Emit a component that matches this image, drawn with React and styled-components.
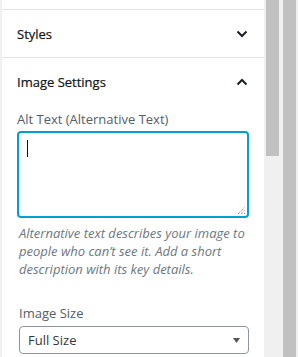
import React from "react";
import styled, { createGlobalStyle } from "styled-components";

const Global = createGlobalStyle`
  html, body { margin: 0; padding: 0; background: #fff; }
  body { font-family: "Open Sans", "Noto Sans", sans-serif; }
  * { box-sizing: border-box; }
`;

const Page = styled.div`
  display: flex;
  width: 298px;
  height: 357px;
  overflow: hidden;
`;

const Panel = styled.div`
  width: 264px;
  height: 100%;
  border-left: 2px solid #f0f0f0;
  background: #fff;
  display: flex;
  flex-direction: column;
`;

const Stub = styled.div`
  height: 10px;
  border-bottom: 1px solid #e2e4e7;
  flex: none;
`;

const Section = styled.div`
  border-bottom: ${(p) => (p.$open ? "none" : "1px solid #e2e4e7")};
  flex: none;
`;

const Header = styled.div`
  height: ${(p) => p.$h}px;
  display: flex;
  align-items: center;
  justify-content: space-between;
  padding: 0 16px 0 15px;
  font-size: 13px;
  font-weight: 400;
  color: #111418;
  -webkit-text-stroke: 0.2px #111418;
`;

const Body = styled.div`
  padding: 4px 15px 0 15px;
  display: flex;
  flex-direction: column;
`;

const Label = styled.div`
  font-size: 13px;
  line-height: 18px;
  color: #555d66;
  margin-bottom: ${(p) => p.$mb}px;
`;

const TextBox = styled.div`
  position: relative;
  width: 232px;
  height: 87px;
  border: 2px solid #00a0d2;
  border-radius: 4px;
  background: #fff;
`;

const Caret = styled.span`
  position: absolute;
  left: 8px;
  top: 7px;
  width: 1px;
  height: 17px;
  background: #111;
`;

const Grip = styled.svg`
  position: absolute;
  right: 1px;
  bottom: 1px;
`;

const Help = styled.p`
  margin: 6px 0 0 2px;
  font-size: 13px;
  line-height: 18px;
  font-style: italic;
  color: #6c7781;
`;

const Field = styled.div`
  margin-top: 26px;
  padding-left: 2px;
  display: flex;
  flex-direction: column;
`;

const Select = styled.div`
  width: 230px;
  height: 28px;
  border: 1px solid #8d96a0;
  border-radius: 4px;
  display: flex;
  align-items: center;
  justify-content: space-between;
  padding: 0 8px 0 8px;
  font-size: 13px;
  color: #32373c;
`;

const Track = styled.div`
  width: 17px;
  height: 100%;
  background: #f0f0f0;
  padding: 0 2px;
  flex: none;
`;

const Thumb = styled.div`
  width: 13px;
  height: ${(p) => p.$h};
  background: #c1c1c1;
`;

const Chevron = ({ up }) => (
  <svg width="12" height="8" viewBox="0 0 12 8">
    <path
      d={up ? "M1.5 6.5 L6 2 L10.5 6.5" : "M1.5 1.5 L6 6 L10.5 1.5"}
      fill="none"
      stroke="#191e23"
      strokeWidth="2"
    />
  </svg>
);

export default function App() {
  return (
    <>
      <Global />
      <Page>
        <Panel>
          <Stub />
          <Section>
            <Header $h={47}>
              <span>Styles</span>
              <Chevron />
            </Header>
          </Section>
          <Section $open>
            <Header $h={48}>
              <span>Image Settings</span>
              <Chevron up />
            </Header>
            <Body>
              <Label $mb={3}>Alt Text (Alternative Text)</Label>
              <TextBox>
                <Caret />
                <Grip width="9" height="9" viewBox="0 0 9 9">
                  <path d="M1 8 L8 1 M4 8 L8 4 M7 8 L8 7" stroke="#666" strokeWidth="1" strokeDasharray="1 1" />
                </Grip>
              </TextBox>
              <Help>
                Alternative text describes your image to people who can’t see it. Add a short
                description with its key details.
              </Help>
              <Field>
                <Label $mb={4}>Image Size</Label>
                <Select>
                  <span>Full Size</span>
                  <svg width="7" height="5" viewBox="0 0 7 5">
                    <path d="M0 0 H7 L3.5 5 Z" fill="#555" />
                  </svg>
                </Select>
              </Field>
            </Body>
          </Section>
        </Panel>
        <Track>
          <Thumb $h="156px" />
        </Track>
        <Track>
          <Thumb $h="100%" />
        </Track>
      </Page>
    </>
  );
}
